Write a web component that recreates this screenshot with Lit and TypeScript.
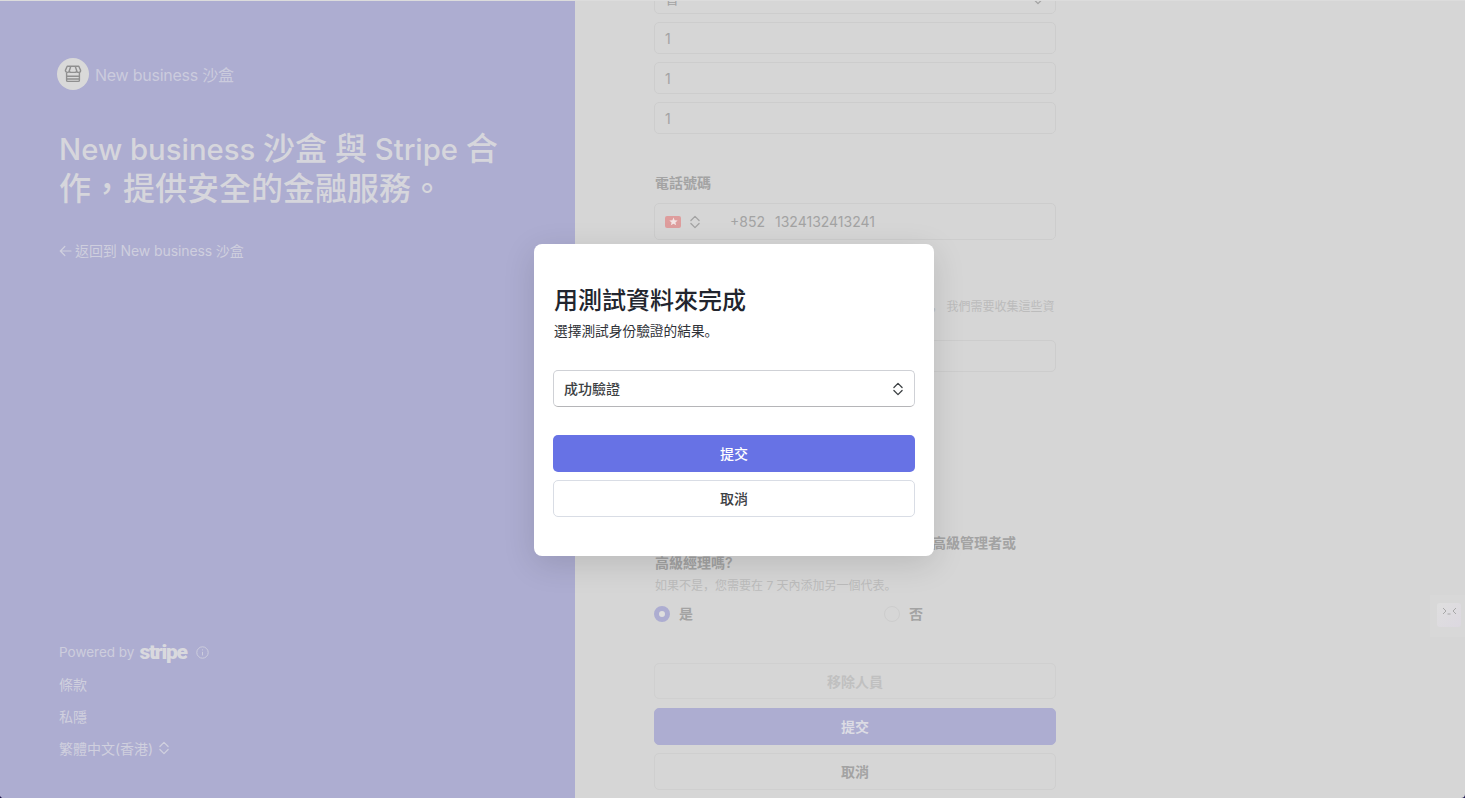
import { LitElement, html, css, svg } from 'lit';
import { customElement } from 'lit/decorators.js';

const chevrons = (size: number) => html`
  <svg class="chev" width=${size} height=${size} viewBox="0 0 12 12" fill="none" stroke="currentColor" stroke-width="1.100" stroke-linecap="round" stroke-linejoin="round">
    <path d="M2.500 4.700 6 1.200l3.500 3.500" />
    <path d="M2.500 7.300 6 10.800l3.500-3.500" />
  </svg>
`;

const storeIcon = svg`
  <path d="M3.200 1.200h11.600l1.800 4.200c0 1.200-.9 2-2 2s-1.900-.8-1.900-1.600c0 .8-.9 1.600-2 1.600H7.300c-1.100 0-2-.8-2-1.600 0 .8-.8 1.600-1.900 1.600s-2-.8-2-2z" />
  <path d="M6.800 1.200l-1.500 4.600M11.200 1.200l1.500 4.600" />
  <path d="M2.600 7.400v7.800c0 .7.500 1.200 1.200 1.200h10.400c.7 0 1.200-.5 1.200-1.200V7.400" />
  <path d="M2.600 11.200h12.800M2.600 14h12.800" />
`;

@customElement('app-root')
export class AppRoot extends LitElement {
  static override styles = css`
    :host {
      display: block;
      height: 798px;
      overflow: hidden;
      font-family: Inter, 'Noto Sans CJK TC', sans-serif;
      font-size: 14px;
      background: #1c1450;
    }

    .page {
      position: relative;
      display: flex;
      height: 798px;
      overflow: hidden;
      border-top: 1px solid #dcdcdc;
      border-radius: 0 0 4px 4px;
      box-sizing: border-box;
      background: #d6d6d6;
    }

    /* left brand panel */
    .side {
      width: 575px;
      flex: none;
      box-sizing: border-box;
      display: flex;
      flex-direction: column;
      padding: 57px 0 40px 59px;
      background: #adadd1;
      color: #d2d2e0;
    }
    .brand {
      display: flex;
      align-items: center;
      gap: 6px;
      margin-left: -2px;
      font-size: 16px;
      letter-spacing: -0.25px;
      color: #cbcbdd;
    }
    .logo {
      width: 32px;
      height: 32px;
      border-radius: 50%;
      background: #d9d9d9;
      color: #8f8f8f;
      display: flex;
      align-items: center;
      justify-content: center;
    }
    h1 {
      margin: 40px 0 0;
      width: 445px;
      font-size: 29.300px;
      line-height: 40px;
      font-weight: 500;
      color: #d6d6dc;
    }
    .cjk {
      font-size: 32px;
      line-height: 1;
    }
    .back {
      display: flex;
      align-items: center;
      gap: 3px;
      margin-top: 31px;
      line-height: 20px;
      letter-spacing: -0.1px;
      color: #cfcfde;
    }
    .foot {
      margin-top: auto;
      display: flex;
      flex-direction: column;
      gap: 12px;
      color: #d0d0de;
    }
    .foot > div {
      display: flex;
      align-items: center;
      height: 20px;
    }
    .powered {
      font-size: 13.500px;
      color: #cdcddd;
    }
    .stripe {
      margin: 0 9px 0 5px;
      font-family: Roboto, sans-serif;
      font-size: 21px;
      font-weight: 900;
      letter-spacing: -1.300px;
      color: #d9d9de;
    }
    .lang .chev {
      margin-left: 4px;
    }

    /* dimmed form behind the dialog */
    .main {
      flex: 1;
      padding-left: 79px;
      margin-top: -19px;
    }
    .form {
      width: 402px;
      display: flex;
      flex-direction: column;
      color: #a3a3a3;
    }
    .field {
      box-sizing: border-box;
      height: 32px;
      margin-bottom: 8px;
      padding: 0 10px;
      display: flex;
      align-items: center;
      justify-content: space-between;
      border: 1px solid #cdcdcd;
      border-radius: 5px;
    }
    .label {
      margin: 31px 0 10px 1px;
      line-height: 20px;
      font-weight: 600;
      color: #a3a3a3;
    }
    .phone {
      height: 37px;
      margin: 0;
      justify-content: flex-start;
    }
    .flag {
      width: 16px;
      height: 12px;
      border-radius: 2px;
      background: #de9d9d;
      display: flex;
      align-items: center;
      justify-content: center;
    }
    .phone .chev {
      margin-left: 7px;
    }
    .code {
      margin-left: 28px;
      width: 45px;
    }
    .hint {
      font-family: Inter, 'Noto Sans CJK JP', sans-serif;
      font-size: 12px;
      line-height: 18px;
      color: #bcbcbc;
    }
    .collect {
      margin: 58px 0 24px;
      padding-left: 277px;
      white-space: nowrap;
    }
    .ask {
      margin: 153px 0 0 1px;
      line-height: 20px;
      font-weight: 600;
      color: #a3a3a3;
    }
    .ask .tail {
      display: block;
      padding-left: 277px;
    }
    .reach {
      margin: 4px 0 0 1px;
    }
    .radios {
      display: grid;
      grid-template-columns: 230px 1fr;
      margin-top: 9px;
    }
    .radio {
      display: flex;
      align-items: center;
      gap: 9px;
      height: 20px;
      font-weight: 600;
    }
    .radio span + span {
      padding-bottom: 2px;
    }
    .dot {
      box-sizing: border-box;
      width: 16px;
      height: 16px;
      border-radius: 50%;
      border: 1px solid #cdcdcd;
    }
    .dot.on {
      border: 5px solid #adadd1;
      background: #dedede;
    }
    .btn {
      box-sizing: border-box;
      height: 37px;
      display: flex;
      align-items: center;
      justify-content: center;
      border-radius: 5px;
      font-weight: 500;
    }
    .form .btn {
      font-weight: 600;
      padding-bottom: 2px;
      border: 1px solid #cfcfcf;
      margin-top: 8px;
    }
    .form .remove {
      margin-top: 39px;
      height: 36px;
      padding-bottom: 0;
      border-color: #d0d0d0;
      color: #c0c0c0;
    }
    .form .primary {
      margin-top: 9px;
      background: #adadd1;
      border-color: #adadd1;
      color: #dcdce4;
    }

    /* dialog */
    .dialog {
      position: absolute;
      left: 534px;
      top: 243px;
      width: 400px;
      height: 312px;
      box-sizing: border-box;
      padding: 42px 19px 0;
      background: #fff;
      border-radius: 8px;
      box-shadow: 0 8px 32px rgba(0, 0, 0, 0.13);
      color: #3c4043;
    }
    h2 {
      margin: 0 0 5px 1px;
      font-size: 24px;
      line-height: 30px;
      font-weight: 500;
      color: #22252e;
    }
    .sub {
      margin: 0 0 0 1px;
      font-family: Inter, 'Noto Sans CJK JP', sans-serif;
      font-size: 13.700px;
      line-height: 20px;
      color: #2f3238;
    }
    .select {
      box-sizing: border-box;
      height: 37px;
      margin-top: 29px;
      padding: 0 9px 2px 10px;
      display: flex;
      align-items: center;
      justify-content: space-between;
      border: 1px solid #cfd1d6;
      border-bottom-color: #b5b5b8;
      border-radius: 5px;
      font-weight: 500;
      color: #3c4043;
    }
    .select .chev {
      margin-top: 2px;
    }
    .dialog .btn {
      padding-bottom: 2px;
    }
    .dialog .btn.submit {
      margin-top: 28px;
      background: #6772e5;
      color: #fff;
    }
    .dialog .btn.cancel {
      margin-top: 8px;
      border: 1px solid #d9dde5;
    }

    /* floating helper on the right edge */
    .helper {
      position: absolute;
      right: 0;
      top: 594px;
      width: 35px;
      height: 42px;
      box-sizing: border-box;
      padding: 8px 0 0 7px;
      background: #d8d8d8;
    }
    .helper svg {
      display: block;
      border-radius: 3px;
      background: linear-gradient(135deg, #dfdfdf, #dcd8e0);
    }
  `;

  override render() {
    return html`
      <div class="page">
        <aside class="side">
          <div class="brand">
            <span class="logo">
              <svg width="18" height="18" viewBox="0 0 18 18" fill="none" stroke="currentColor" stroke-width="1.400" stroke-linejoin="round">${storeIcon}</svg>
            </span>
            New business 沙盒
          </div>
          <h1>New business <span class="cjk">沙盒</span> <span class="cjk">與</span> Stripe <span class="cjk">合</span><span class="cjk">作，提供安全的金融服務。</span></h1>
          <div class="back">
            <svg width="13" height="12" viewBox="0 0 13 12" fill="none" stroke="currentColor" stroke-width="1.200" stroke-linecap="round" stroke-linejoin="round">
              <path d="M12 6H1.500M5.800 1.500 1.300 6l4.500 4.500" />
            </svg>
            返回到 New business 沙盒
          </div>
          <div class="foot">
            <div class="powered">
              Powered by<span class="stripe">stripe</span>
              <svg width="13" height="13" viewBox="0 0 13 13" fill="none" stroke="currentColor" stroke-width="1">
                <circle cx="6.500" cy="6.500" r="5.700" />
                <path d="M6.500 5.800v3.600M6.500 3.400v1" />
              </svg>
            </div>
            <div>條款</div>
            <div>私隱</div>
            <div class="lang">繁體中文(香港) ${chevrons(14)}</div>
          </div>
        </aside>

        <main class="main">
          <div class="form">
            <div class="field">香 ${chevrons(14)}</div>
            <div class="field">1</div>
            <div class="field">1</div>
            <div class="field">1</div>
            <div class="label">電話號碼</div>
            <div class="field phone">
              <span class="flag">
                <svg width="9" height="9" viewBox="0 0 8 8" fill="#f3e4e4"><path d="M4 .4l1 2.500 2.700.2-2 1.700.7 2.600L4 6 1.600 7.400l.7-2.600-2-1.700L3 2.900z" /></svg>
              </span>
              ${chevrons(14)}
              <span class="code">+852</span>
              <span>1324132413241</span>
            </div>
            <div class="hint collect">， 我們需要收集這些資</div>
            <div class="field"></div>
            <div class="ask">
              <span class="tail">高級管理者或</span>
              高級經理嗎?
            </div>
            <div class="hint reach">如果不是，您需要在 7 天內添加另一個代表。</div>
            <div class="radios">
              <div class="radio"><span class="dot on"></span><span>是</span></div>
              <div class="radio"><span class="dot"></span><span>否</span></div>
            </div>
            <div class="btn remove">移除人員</div>
            <div class="btn primary">提交</div>
            <div class="btn">取消</div>
          </div>
        </main>

        <section class="dialog">
          <h2>用測試資料來完成</h2>
          <p class="sub">選擇測試身份驗證的結果。</p>
          <div class="select">成功驗證 ${chevrons(14)}</div>
          <div class="btn submit">提交</div>
          <div class="btn cancel">取消</div>
        </section>

        <div class="helper">
          <svg width="24" height="24" viewBox="0 0 24 24" fill="none" stroke="#a8a8a8" stroke-width="1">
            <path d="M6 5l3 3-3 3M19 5l-3 3 3 3M10.500 11h3" />
          </svg>
        </div>
      </div>
    `;
  }
}
